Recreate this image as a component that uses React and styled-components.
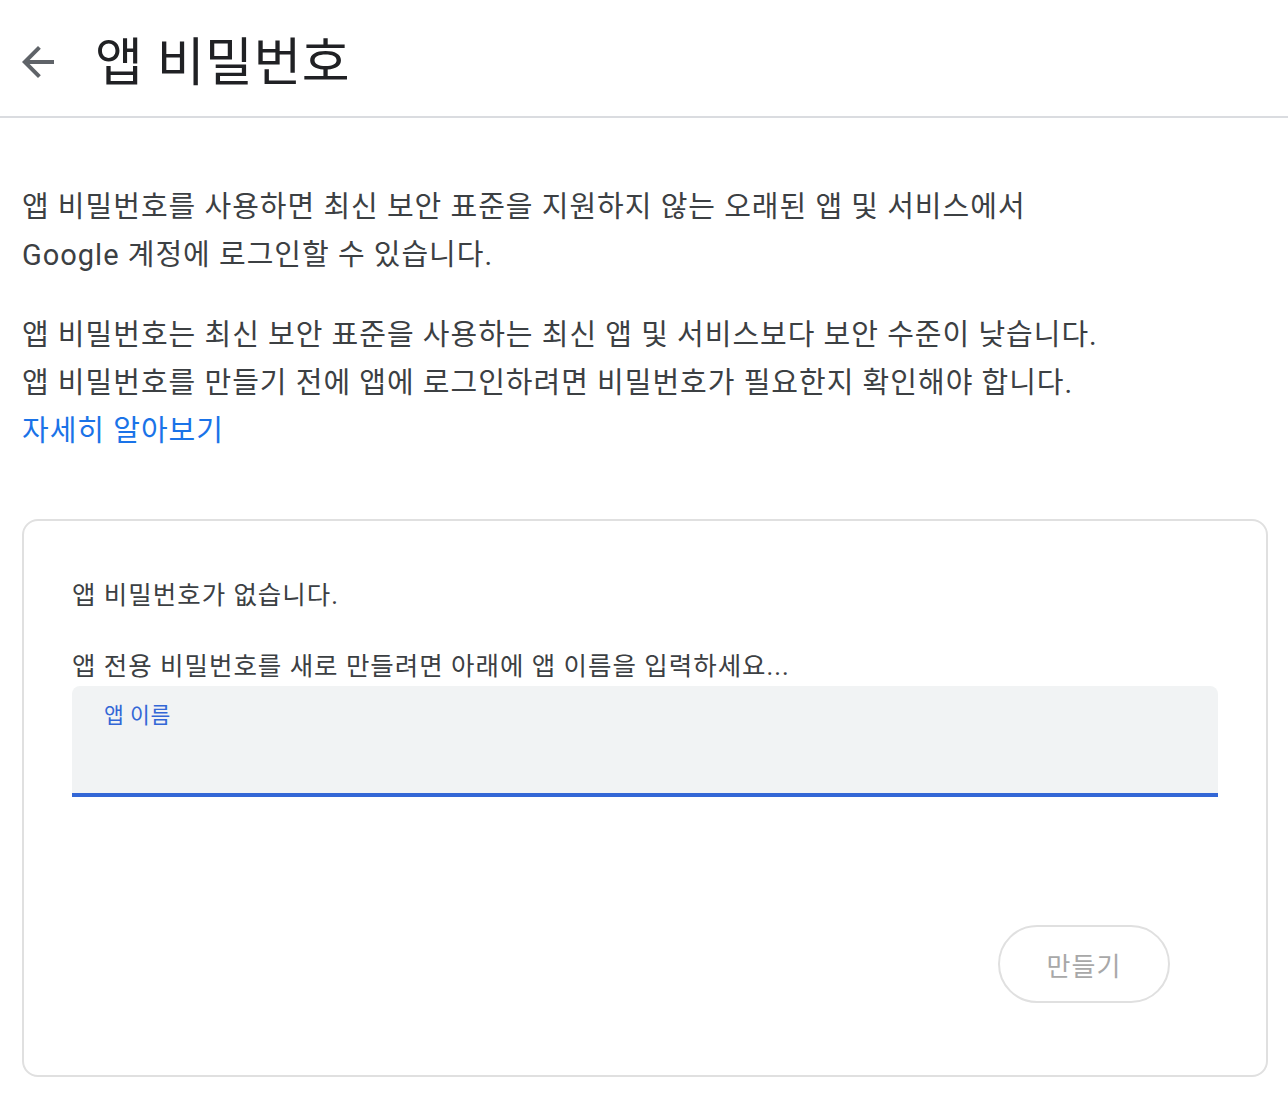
import React from "react";
import styled, { createGlobalStyle } from "styled-components";

const Global = createGlobalStyle`
  html, body { margin: 0; padding: 0; background: #fff; }
  body { font-family: Roboto, "Noto Sans CJK KR", sans-serif; color: #3c4043; }
`;

const Page = styled.div`
  width: 1288px;
  min-height: 1098px;
  box-sizing: border-box;
`;

const Header = styled.header`
  height: 118px;
  box-sizing: border-box;
  display: flex;
  align-items: center;
  border-bottom: 2px solid #dadce0;
  padding: 8px 0 0 14px;
  gap: 33px;
`;

const BackButton = styled.button`
  width: 48px;
  height: 48px;
  padding: 0;
  border: none;
  background: none;
  display: flex;
  align-items: center;
  justify-content: center;
  cursor: pointer;
  color: #5f6368;
`;

const Title = styled.h1`
  margin: 0;
  position: relative;
  top: 2px;
  font-size: 52px;
  letter-spacing: 0.5px;
  font-weight: 400;
  color: #202124;
  line-height: 60px;
`;

const Content = styled.main`
  padding: 65px 20px 22px 22px;
`;

const Para = styled.p`
  margin: 0 0 ${(p) => p.$mb || 0}px;
  font-size: 29px;
  letter-spacing: 1px;
  line-height: 48px;
  color: #3c4043;
`;

const Link = styled.a`
  color: #1a73e8;
  text-decoration: none;
`;

const Card = styled.section`
  margin-top: 64px;
  border: 2px solid #e0e0e0;
  border-radius: 16px;
  padding: 54px 48px 72px;
  display: flex;
  flex-direction: column;
`;

const CardText = styled.p`
  margin: 0 0 ${(p) => p.$mb || 0}px;
  font-size: 25.5px;
  letter-spacing: 1px;
  line-height: 40px;
  color: #3c4043;
`;

const Field = styled.label`
  display: block;
  height: 111px;
  box-sizing: border-box;
  background: #f1f3f4;
  border-radius: 8px 8px 0 0;
  border-bottom: 4px solid #3367d6;
  padding: 15px 32px 0;
  margin-top: 0;
`;

const FieldLabel = styled.span`
  display: block;
  font-size: 21.5px;
  letter-spacing: 0.5px;
  line-height: 30px;
  color: #3367d6;
`;

const FieldInput = styled.input`
  display: block;
  width: 100%;
  border: none;
  outline: none;
  background: transparent;
  font-size: 24px;
  font-family: inherit;
  padding: 8px 0;
`;

const Actions = styled.div`
  display: flex;
  justify-content: flex-end;
  margin-top: 128px;
  padding-right: 48px;
`;

const CreateButton = styled.button`
  width: 172px;
  height: 78px;
  border-radius: 39px;
  border: 2px solid #e0e0e0;
  background: #fff;
  color: #a8a8a8;
  font-family: inherit;
  font-size: 26px;
  letter-spacing: 1px;
  padding: 0;
`;

export default function App() {
  return (
    <Page>
      <Global />
      <Header>
        <BackButton aria-label="뒤로">
          <svg width="48" height="48" viewBox="0 0 24 24" fill="currentColor">
            <path d="M20 11H7.83l5.59-5.59L12 4l-8 8 8 8 1.41-1.41L7.83 13H20v-2z" />
          </svg>
        </BackButton>
        <Title>앱 비밀번호</Title>
      </Header>
      <Content>
        <Para $mb={32}>
          앱 비밀번호를 사용하면 최신 보안 표준을 지원하지 않는 오래된 앱 및 서비스에서
          <br />
          Google 계정에 로그인할 수 있습니다.
        </Para>
        <Para>
          앱 비밀번호는 최신 보안 표준을 사용하는 최신 앱 및 서비스보다 보안 수준이 낮습니다.
          <br />
          앱 비밀번호를 만들기 전에 앱에 로그인하려면 비밀번호가 필요한지 확인해야 합니다.
          <br />
          <Link href="#">자세히 알아보기</Link>
        </Para>
        <Card>
          <CardText $mb={31}>앱 비밀번호가 없습니다.</CardText>
          <CardText>앱 전용 비밀번호를 새로 만들려면 아래에 앱 이름을 입력하세요...</CardText>
          <Field>
            <FieldLabel>앱 이름</FieldLabel>
            <FieldInput type="text" />
          </Field>
          <Actions>
            <CreateButton disabled>만들기</CreateButton>
          </Actions>
        </Card>
      </Content>
    </Page>
  );
}
